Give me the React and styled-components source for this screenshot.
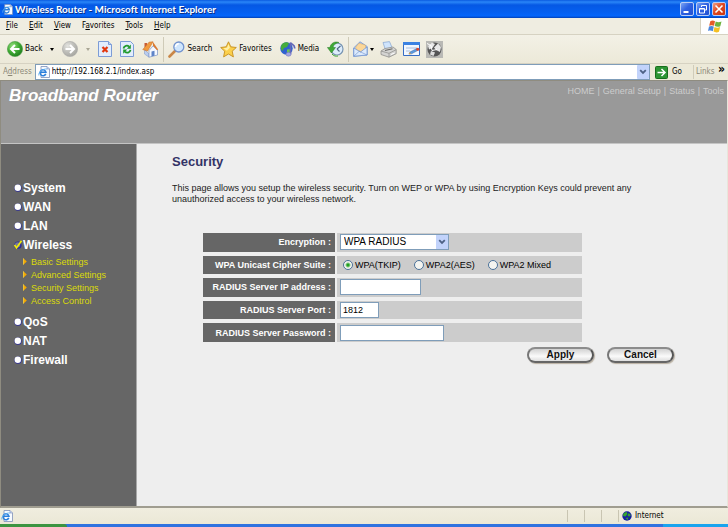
import React, { useState } from "react";
import styled, { createGlobalStyle, css } from "styled-components";

const ui = '"DejaVu Sans Condensed", "Noto Sans", sans-serif';
const web = '"Liberation Sans", Arial, sans-serif';

const GlobalStyle = createGlobalStyle`
  *, *::before, *::after { box-sizing: border-box; }
  body { margin: 0; background: #ece9d8; }
  button, input, select { font: inherit; color: inherit; margin: 0; }
  h1, h2, p, ul { margin: 0; padding: 0; }
  ul { list-style: none; }
  a { color: inherit; text-decoration: none; }
`;

const Window = styled.div`
  min-height: 100vh;
  display: flex;
  flex-direction: column;
  font: 8px/12px ${ui};
  color: #000;
`;

/* ---------- window chrome ---------- */

const TitleBar = styled.header`
  height: 18px;
  display: flex;
  align-items: center;
  gap: 2px;
  padding: 0 2px;
  background: linear-gradient(#0a5be0 0, #2a86f8 2px, #0558e4 5px, #0560f0 12px, #0466fb 16px, #0340b5 18px);
`;

const Caption = styled.div`
  flex: 1;
  color: #fff;
  font-family: Lato, "Open Sans", sans-serif;
  font-size: 10px;
  font-weight: bold;
  text-shadow: 1px 1px 0 #0a2f86;
  white-space: nowrap;
`;

const CaptionButtons = styled.div`
  display: flex;
  gap: 2px;
`;

const CaptionButton = styled.button`
  width: 14px;
  height: 14px;
  padding: 0;
  display: grid;
  place-items: center;
  border: 1px solid #b9cdf5;
  border-radius: 2px;
  background: ${(p) =>
    p.$close
      ? "linear-gradient(135deg, #f0a088, #e04a22 45%, #c8350f)"
      : "linear-gradient(135deg, #7ba4f4, #2f62e2 45%, #2250d0)"};
`;

const MenuBar = styled.nav`
  height: 17px;
  display: flex;
  align-items: stretch;
  justify-content: space-between;
  background: #efede1;
  border-bottom: 1px solid #d6d2c2;
`;

const MenuList = styled.div`
  display: flex;
  align-items: center;
  gap: 11px;
  padding-left: 6px;
`;

const MenuItem = styled.button`
  padding: 0;
  border: 0;
  background: none;
`;

const Throbber = styled.div`
  width: 28px;
  display: grid;
  place-items: center;
  background: #fff;
  border-left: 1px solid #d6d2c2;
`;

const Toolbar = styled.div`
  height: 29px;
  display: flex;
  align-items: center;
  gap: 4px;
  padding: 0 7px;
  background: linear-gradient(#f3f1e6, #ece9d8);
  border-bottom: 1px solid #d6d2c2;
`;

const ToolGroup = styled.div`
  display: flex;
  align-items: center;
  gap: ${(p) => (p.$tight ? "6px" : "8px")};
`;

const ToolButton = styled.button`
  display: flex;
  align-items: center;
  gap: 2px;
  padding: 0;
  border: 0;
  background: none;
  svg { flex: none; }
  &:disabled { color: #a9a695; }
`;

const Divider = styled.div`
  width: 1px;
  height: 25px;
  background: #cfcbb8;
`;

const AddressBar = styled.form`
  height: 16px;
  display: flex;
  align-items: center;
  gap: 3px;
  padding-left: 3px;
  background: #ece9d8;
`;

const AddressLabel = styled.label`
  color: #8b8877;
`;

const AddressField = styled.div`
  flex: 1;
  height: 16px;
  display: flex;
  align-items: center;
  gap: 2px;
  padding-left: 2px;
  background: #fff;
  border: 1px solid #7f9db9;
`;

const AddressInput = styled.input`
  flex: 1;
  min-width: 0;
  padding: 0;
  border: 0;
  outline: 0;
  background: none;
`;

const DropButton = styled.button`
  width: 12px;
  height: 14px;
  padding: 0;
  display: grid;
  place-items: center;
  border: 0;
  border-radius: 1px;
  background: #c2d3fb;
`;

const LinksBar = styled.div`
  height: 14px;
  width: 35px;
  display: flex;
  align-items: center;
  justify-content: space-between;
  padding: 0 3px 0 2px;
  border-left: 1px solid #d0ccba;
  color: #8b8877;
`;

const GoButton = styled(ToolButton)`
  width: 37px;
  gap: 4px;
  padding-left: 2px;
`;

const Chevrons = styled.strong`
  align-self: flex-start;
  font-size: 12px;
  line-height: 8px;
  color: #000;
`;

/* ---------- router page ---------- */

const Page = styled.div`
  flex: 1;
  display: flex;
  flex-direction: column;
  border: 1px solid #8f8c80;
  border-right-color: #e8e6da;
  border-bottom: 2px solid #a09d90;
  background: #eee;
  font-family: ${web};
  font-size: 9px;
`;

const Banner = styled.header`
  height: 63px;
  display: flex;
  align-items: flex-start;
  justify-content: space-between;
  padding: 4px 3px 0 8px;
  background: #999;
  border-bottom: 1px solid #c4c4c4;
`;

const Brand = styled.h1`
  font-size: 17px;
  line-height: 22px;
  font-style: italic;
  color: #fff;
`;

const TopNav = styled.nav`
  display: flex;
  gap: 3px;
  color: #ccc;
  white-space: nowrap;
`;

const Body = styled.div`
  flex: 1;
  display: flex;
`;

const Sidebar = styled.nav`
  width: 136px;
  flex: none;
  padding: 34px 0 0 12px;
  background: #666;
  border-right: 1px solid #a8a8a8;
`;

const NavLink = styled.a`
  display: flex;
  align-items: center;
  gap: 1px;
  height: 19px;
  font-size: 12px;
  font-weight: bold;
  color: #fff;
`;

const SubList = styled.ul`
  padding: 1px 0 5px 10px;
`;

const SubLink = styled.a`
  display: flex;
  align-items: center;
  gap: 4px;
  height: 13px;
  color: #dcdc08;
`;

const Main = styled.main`
  flex: 1;
  min-width: 0;
  padding: 10px 38px 0 35px;
`;

const Heading = styled.h2`
  font-size: 13px;
  line-height: 16px;
  color: #333366;
`;

const Intro = styled.p`
  max-width: 490px;
  margin-top: 13px;
  line-height: 11px;
  color: #222;
`;

const Rows = styled.div`
  display: grid;
  grid-auto-rows: 1fr;
  gap: 4px;
  min-height: 109px;
  max-width: 379px;
  margin: 28px 0 0 31px;
`;

const Row = styled.div`
  display: grid;
  grid-template-columns: 132px 1fr;
  gap: 2px;
`;

const labelLook = css`
  display: flex;
  align-items: center;
  justify-content: flex-end;
  padding-right: 4px;
  background: #666;
  color: #fff;
  font-weight: bold;
  white-space: nowrap;
`;

const RowLabel = styled.label`${labelLook}`;
const GroupLabel = styled.div`${labelLook}`;

const RowValue = styled.div`
  display: flex;
  align-items: center;
  gap: 13px;
  padding-left: ${(p) => (p.$inset ? 6 : 3)}px;
  background: #ccc;
`;

const TextBox = styled.input`
  width: ${(p) => p.$width}px;
  height: 16px;
  padding: 0 2px;
  border: 1px solid #7f9db9;
  background: #fff;
  outline: 0;
`;

const SelectWrap = styled.div`
  width: 109px;
  height: 16px;
  display: grid;
  grid-template-columns: 1fr 12px;
  align-items: center;
  background: #fff;
  border: 1px solid #7f9db9;
`;

const Select = styled.select`
  grid-area: 1 / 1 / 2 / 3;
  height: 14px;
  padding: 0 14px 0 3px;
  border: 0;
  outline: 0;
  appearance: none;
  background: none;
  font-size: 10px;
`;

const SelectArrow = styled.span`
  grid-area: 1 / 2;
  height: 14px;
  display: grid;
  place-items: center;
  background: #c2d3fb;
  pointer-events: none;
`;

const RadioLabel = styled.label`
  display: flex;
  align-items: center;
  gap: 2px;
  white-space: nowrap;
`;

const Radio = styled.input.attrs({ type: "radio" })`
  appearance: none;
  width: 10px;
  height: 10px;
  border: 1px solid #4a7199;
  border-radius: 50%;
  background: #f4f4f0;
  &:checked { background: radial-gradient(circle, #22a022 0 1px, #f4f4f0 3px); }
`;

const Actions = styled.div`
  display: flex;
  justify-content: flex-end;
  gap: 13px;
  max-width: 502px;
  margin-top: 5px;
`;

const PillButton = styled.button`
  width: 67px;
  height: 16px;
  padding: 0;
  border: 2px solid;
  border-color: #8c8c8c #555 #666 #777;
  border-radius: 8px;
  background: linear-gradient(#d2d2d2, #fafafa 60%, #dedede);
  box-shadow: 1px 1px 1px #b8afa0;
  font-size: 10px;
  line-height: 12px;
  font-weight: bold;
  color: #111;
`;

/* ---------- bottom bars ---------- */

const StatusBar = styled.footer`
  height: 16px;
  display: flex;
  align-items: center;
  padding-left: 1px;
  background: linear-gradient(#f0eddf, #ebe8d6);
`;

const StatusText = styled.div`
  flex: 1;
  display: flex;
`;

const StatusCell = styled.div`
  width: ${(p) => (p.$wide ? 110 : 17)}px;
  height: 12px;
  display: flex;
  align-items: center;
  gap: 3px;
  padding-left: 3px;
  border-left: 1px solid #c9c5b2;
`;

const TaskBar = styled.div`
  height: 3px;
  display: flex;
  background: #2f73e0;
`;

const StartEdge = styled.div`
  width: 67px;
  background: #3c9440;
  border-top-right-radius: 3px;
`;

const TrayEdge = styled.div`
  width: 65px;
  margin-left: auto;
  background: #19a4ee;
`;

/* ---------- drawings ---------- */

const IePage = ({ size = 12 }) => (
  <svg width={size} height={size} viewBox="0 0 12 12" aria-hidden="true">
    <path d="M3 .5h6l2.500 2.500v8.500H3z" fill="#f6faff" stroke="#7d8fb8" strokeWidth=".8" />
    <path d="M9 .5v2.500h2.500" fill="#c5d5f2" stroke="#7d8fb8" strokeWidth=".6" />
    <path d="M7.800 7.900A3 3 0 1 1 8 6.300H2.600" fill="none" stroke="#2b7fdc" strokeWidth="1.500" />
    <path d="M.8 9.500C-.3 6.500 5 2.300 9 3.100" fill="none" stroke="#58aef2" strokeWidth=".8" />
  </svg>
);

const DownCaret = () => (
  <svg width="4" height="3" viewBox="0 0 4 3" aria-hidden="true">
    <path d="M0 0h4L2 3z" fill="currentColor" />
  </svg>
);

const ComboArrow = () => (
  <svg width="8" height="6" viewBox="0 0 8 6" aria-hidden="true">
    <path d="M1.200 1.200L4 4l2.800-2.800" fill="none" stroke="#4d6185" strokeWidth="1.800" />
  </svg>
);

const ArrowDisc = ({ forward }) => (
  <svg width="16" height="16" viewBox="0 0 16 16" aria-hidden="true">
    <defs>
      <radialGradient id={forward ? "discF" : "discB"} cx=".35" cy=".3" r=".75">
        <stop offset="0" stopColor={forward ? "#e4e4e0" : "#94df7c"} />
        <stop offset=".55" stopColor={forward ? "#bdbdb8" : "#3faa33"} />
        <stop offset="1" stopColor={forward ? "#a6a6a0" : "#1e7c1d"} />
      </radialGradient>
    </defs>
    <circle cx="8" cy="8" r="7.600" fill={`url(#${forward ? "discF" : "discB"})`} stroke={forward ? "#aaa" : "#4b9a45"} strokeWidth=".6" />
    <path
      d={forward ? "M3.500 8h8M8 4l4 4-4 4" : "M12.500 8h-8M8 4L4 8l4 4"}
      fill="none" stroke="#fff" strokeWidth="2"
    />
  </svg>
);

const SheetBase = () => (
  <path d="M.5.5h10l3 3v12H.5z" fill="#e2edfd" stroke="#7c9cd6" />
);

const StopIcon = () => (
  <svg width="14" height="16" viewBox="0 0 14 16" aria-hidden="true">
    <SheetBase />
    <path d="M10.500.5v3h3" fill="#bdd2f6" stroke="#7c9cd6" />
    <path d="M4.500 6l5 5M9.500 6l-5 5" stroke="#e2380f" strokeWidth="2.200" />
  </svg>
);

const RefreshIcon = () => (
  <svg width="14" height="16" viewBox="0 0 14 16" aria-hidden="true">
    <SheetBase />
    <path d="M3.500 7.500C4 4.500 7.500 3.800 9 5.700" fill="none" stroke="#1f9a2c" strokeWidth="1.800" />
    <path d="M10.800 3.500v4.300H6.800z" fill="#1f9a2c" />
    <path d="M10.500 8.800c-.5 3-4 3.700-5.500 1.800" fill="none" stroke="#1f9a2c" strokeWidth="1.800" />
    <path d="M3.200 12.800V8.600h4z" fill="#1f9a2c" />
  </svg>
);

const HomeIcon = () => (
  <svg width="17" height="17" viewBox="0 0 17 17" aria-hidden="true">
    <path d="M2.500 2h2.500v4H2.500z" fill="#c85a32" />
    <path d="M2.500 8.500L7 13v3.200L2.500 13z" fill="#b9cdf0" stroke="#7b93c4" strokeWidth=".5" />
    <path d="M7 16.200V9.500l4-4.500 4.500 4v5z" fill="#f5f8ff" stroke="#7b93c4" strokeWidth=".7" />
    <path d="M9.500 10.500l3-.7v5l-3 .7z" fill="#5e84c8" />
    <path d="M.8 8.500L7 1.200 11 .8 5.500 10z" fill="#f19a3e" stroke="#c8702c" strokeWidth=".6" />
    <path d="M10.800.8L16.200 8.500l-1.200.8L11 4.500z" fill="#dc7b30" />
  </svg>
);

const SearchIcon = () => (
  <svg width="17" height="17" viewBox="0 0 17 17" aria-hidden="true">
    <path d="M1.500 15.500l5.500-5.500" stroke="#c98747" strokeWidth="2.600" strokeLinecap="round" />
    <circle cx="10.800" cy="6" r="5" fill="#cfe6fd" stroke="#7394cf" strokeWidth="1.300" />
    <path d="M7.500 6a3.500 3.500 0 0 1 3.300-3.300" fill="none" stroke="#fff" strokeWidth="1.400" />
  </svg>
);

const StarIcon = () => (
  <svg width="17" height="17" viewBox="0 0 17 17" aria-hidden="true">
    <path d="M8.500.8l2.300 5 5.500.7-4.100 3.700 1.200 5.700-4.900-2.900-4.900 2.900 1.100-5.700L.7 6.500l5.500-.7z" fill="#fbd04c" stroke="#c48d1e" strokeWidth=".9" />
    <path d="M8.500 3l1.400 3.800-3 3-3.500-2.500 3.600-.5z" fill="#fff0a8" />
  </svg>
);

const MediaIcon = () => (
  <svg width="16" height="16" viewBox="0 0 16 16" aria-hidden="true">
    <circle cx="6.500" cy="7.500" r="6.200" fill="#2f62cf" />
    <path d="M1.500 4c2-3.500 6-3.200 7.500-1.500L7 6 4 7 2.500 10C.5 8.500.5 6 1.500 4z" fill="#45ad3c" />
    <path d="M7 8.500l4-.5-1 4-3 1z" fill="#6cc552" />
    <path d="M10.500 13V1.500c1 2.500 5 2 4 6" fill="none" stroke="#6468b8" strokeWidth="1.700" />
    <ellipse cx="8.500" cy="13.200" rx="2.600" ry="2" fill="#a3a6e4" stroke="#6468b8" strokeWidth=".5" />
  </svg>
);

const HistoryIcon = () => (
  <svg width="17" height="16" viewBox="0 0 17 16" aria-hidden="true">
    <circle cx="10" cy="8" r="6" fill="#dcecfb" stroke="#7895b3" strokeWidth="1.200" />
    <path d="M10 8l3.500-3M10 8l2.500 2.500" stroke="#4d6785" strokeWidth="1.100" />
    <path d="M12 1.500C7.500-.2 3.500 2.500 3 6.500H.4L4.500 12l4-5.500H6C6.300 4.300 8.500 2 12 1.500z" fill="#3fa937" stroke="#287d25" strokeWidth=".5" />
    <path d="M5 13c1.500 2 4 2.500 6 2" fill="none" stroke="#3fa937" />
  </svg>
);

const MailIcon = () => (
  <svg width="15" height="16" viewBox="0 0 15 16" aria-hidden="true">
    <path d="M.6 7L7 .8 14.200 5.500V14L.6 15.400z" fill="#b9d3f7" stroke="#6e92cf" strokeWidth=".8" />
    <path d="M2.800 6L6 2.200l6.500 2v4.500L7.500 11 3 8.500z" fill="#fbd799" stroke="#dca65b" strokeWidth=".5" />
    <path d="M.8 7l6.700 4L14 6v8L.8 15.200z" fill="#dceafc" stroke="#6e92cf" strokeWidth=".7" />
    <path d="M.8 15.200l5.500-5 1.500.8L14 14" fill="none" stroke="#6e92cf" strokeWidth=".6" />
  </svg>
);

const PrintIcon = () => (
  <svg width="17" height="17" viewBox="0 0 17 17" aria-hidden="true">
    <path d="M3 1.500L9.500.6l3 7-7 1.500z" fill="#cfe4fc" stroke="#84a3cf" strokeWidth=".7" />
    <path d="M1 10l4-2.500 8-1.500 3.200 2.500v4.200L9 16.200 1 13.500z" fill="#d4d4d2" stroke="#858583" strokeWidth=".7" />
    <path d="M1 10l8 2.300 7.200-3.600M9 12.300v3.900" fill="none" stroke="#92928f" strokeWidth=".8" />
    <path d="M5 9.500l7.500-1.800" stroke="#696967" strokeWidth="1.100" />
    <path d="M11 13.500l3.500-1.500" stroke="#fff" />
  </svg>
);

const EditIcon = () => (
  <svg width="17" height="14" viewBox="0 0 17 14" aria-hidden="true">
    <path d="M.5.5h16v13H.5z" fill="#f2f7fe" stroke="#356dc5" />
    <path d="M0 0h17v3H0z" fill="#3b82e2" />
    <path d="M3 6h11M3 9h4" stroke="#a7bee0" />
    <path d="M6 12l1-2 7-3.500 1 1.800-6.500 3.500z" fill="#5b9de4" stroke="#355f97" strokeWidth=".5" />
    <circle cx="14.800" cy="7.300" r="1.500" fill="#df452b" />
    <path d="M5.500 12.200l2.400-.3-1-1.700z" fill="#e6a33e" />
  </svg>
);

const DiscussIcon = () => (
  <svg width="17" height="17" viewBox="0 0 17 17" aria-hidden="true">
    <path d="M0 0h17v17H0z" fill="#b9b9b5" />
    <circle cx="8.500" cy="8.500" r="7" fill="#555" />
    <path d="M2 5l4-3.500 3 1.500-2.500 4L3 8.500zM8 6.500l4-4 3 3.500-1 5-4-2z" fill="#e8e8e8" />
    <path d="M5 10l4 1.500L7.500 15 4 13.500z" fill="#ddd" />
    <path d="M1 2.500l4 2 1 5 5-1" fill="none" stroke="#fff" />
  </svg>
);

const GoIcon = () => (
  <svg width="13" height="13" viewBox="0 0 13 13" aria-hidden="true">
    <rect x=".5" y=".5" width="12" height="12" rx="1" fill="#2c9433" stroke="#166e1c" />
    <path d="M2.500 6.500h7M6.500 3l3.500 3.500L6.500 10" fill="none" stroke="#fff" strokeWidth="1.500" />
  </svg>
);

const WindowsFlag = () => (
  <svg width="14" height="13" viewBox="0 0 14 13" aria-hidden="true">
    <path d="M2.300 1.200C4 .2 5.500.4 7 1.200L6 5.700C4.500 5 3 4.900 1.200 5.700z" fill="#e65a28" />
    <path d="M7.700 1.500c1.800.9 3.800.9 5.800 0l-1.200 4.700c-1.800.8-3.800.7-5.600-.2z" fill="#6fb33f" />
    <path d="M1 6.600c1.700-.9 3.300-.8 4.800 0l-1 4.600C3.300 10.400 1.700 10.300 0 11z" fill="#4a86dc" />
    <path d="M6.500 7c1.700.8 3.600.9 5.600.1L11 11.800c-2 .9-3.800.7-5.500-.2z" fill="#f4c024" />
  </svg>
);

const MinimizeGlyph = () => (
  <svg width="10" height="10" viewBox="0 0 10 10" aria-hidden="true"><path d="M1.500 7h5v2h-5z" fill="#fff" /></svg>
);
const RestoreGlyph = () => (
  <svg width="10" height="10" viewBox="0 0 10 10" aria-hidden="true">
    <path d="M3.500 3V1.500h5v4.500H7M1.500 4.500h5V9h-5zM1.500 5h5" fill="none" stroke="#fff" />
  </svg>
);
const CloseGlyph = () => (
  <svg width="10" height="10" viewBox="0 0 10 10" aria-hidden="true"><path d="M1.500 1.500l7 7M8.500 1.500l-7 7" stroke="#fff" strokeWidth="1.600" /></svg>
);

const Bullet = ({ checked }) => (
  <svg width="9" height="10" viewBox="0 0 9 10" aria-hidden="true">
    <circle cx="5" cy="5.200" r="3.600" fill="#2a2a9c" />
    {checked ? (
      <>
        <circle cx="4.600" cy="4.800" r="2.600" fill="#777a9c" />
        <path d="M1.500 5l2 3L8.500.8" fill="none" stroke="#f4f000" strokeWidth="1.500" />
      </>
    ) : (
      <circle cx="4.800" cy="4.700" r="3.200" fill="#fff" />
    )}
  </svg>
);

const SubMarker = () => (
  <svg width="4" height="7" viewBox="0 0 4 7" aria-hidden="true">
    <path d="M.3.300L3.800 3.500.3 6.700z" fill="#f5a800" />
    <path d="M.3.300v6.400" stroke="#ffe04a" strokeWidth=".8" />
  </svg>
);

const Globe = () => (
  <svg width="10" height="10" viewBox="0 0 10 10" aria-hidden="true">
    <circle cx="5" cy="5" r="4.700" fill="#1720a0" />
    <path d="M1.500 2.500L4.500.8 5.500 3 3.500 5.500 1 5zM6.500 2l2.500 2-1.500 1.500L5.500 5zM3.500 7l3-.5L5.500 9z" fill="#35a52d" />
  </svg>
);

/* ---------- screens ---------- */

const menus = [["", "F", "ile"], ["", "E", "dit"], ["", "V", "iew"], ["F", "a", "vorites"], ["", "T", "ools"], ["", "H", "elp"]];
const topLinks = ["HOME", "General Setup", "Status", "Tools"];
const sections = [
  { name: "System" },
  { name: "WAN" },
  { name: "LAN" },
  { name: "Wireless", children: ["Basic Settings", "Advanced Settings", "Security Settings", "Access Control"] },
  { name: "QoS" },
  { name: "NAT" },
  { name: "Firewall" },
];
const ciphers = ["WPA(TKIP)", "WPA2(AES)", "WPA2 Mixed"];

function BrowserChrome() {
  return (
    <>
      <TitleBar>
        <IePage size={11} />
        <Caption>Wireless Router - Microsoft Internet Explorer</Caption>
        <CaptionButtons>
          <CaptionButton aria-label="Minimize"><MinimizeGlyph /></CaptionButton>
          <CaptionButton aria-label="Restore"><RestoreGlyph /></CaptionButton>
          <CaptionButton $close aria-label="Close"><CloseGlyph /></CaptionButton>
        </CaptionButtons>
      </TitleBar>
      <MenuBar aria-label="Menu">
        <MenuList>
          {menus.map(([before, key, after]) => (
            <MenuItem key={before + key + after}>{before}<u>{key}</u>{after}</MenuItem>
          ))}
        </MenuList>
        <Throbber><WindowsFlag /></Throbber>
      </MenuBar>
      <Toolbar>
        <ToolGroup>
          <ToolButton><ArrowDisc /> Back</ToolButton>
          <ToolButton aria-label="Back history"><DownCaret /></ToolButton>
          <ToolButton aria-label="Forward"><ArrowDisc forward /></ToolButton>
          <ToolButton aria-label="Forward history" disabled><DownCaret /></ToolButton>
          <ToolButton aria-label="Stop"><StopIcon /></ToolButton>
          <ToolButton aria-label="Refresh"><RefreshIcon /></ToolButton>
          <ToolButton aria-label="Home"><HomeIcon /></ToolButton>
        </ToolGroup>
        <Divider />
        <ToolGroup>
          <ToolButton><SearchIcon /> Search</ToolButton>
          <ToolButton><StarIcon /> Favorites</ToolButton>
          <ToolButton><MediaIcon /> Media</ToolButton>
          <ToolButton aria-label="History"><HistoryIcon /></ToolButton>
        </ToolGroup>
        <Divider />
        <ToolGroup $tight>
          <ToolButton aria-label="Mail"><MailIcon /> <DownCaret /></ToolButton>
          <ToolButton aria-label="Print"><PrintIcon /></ToolButton>
          <ToolButton aria-label="Edit"><EditIcon /></ToolButton>
          <ToolButton aria-label="Discuss"><DiscussIcon /></ToolButton>
        </ToolGroup>
      </Toolbar>
      <AddressBar onSubmit={(e) => e.preventDefault()}>
        <AddressLabel htmlFor="address">A<u>d</u>dress</AddressLabel>
        <AddressField>
          <IePage size={12} />
          <AddressInput id="address" defaultValue="http://192.168.2.1/index.asp" />
          <DropButton type="button" aria-label="Recent addresses"><ComboArrow /></DropButton>
        </AddressField>
        <GoButton><GoIcon /> Go</GoButton>
        <LinksBar>Links <Chevrons>»</Chevrons></LinksBar>
      </AddressBar>
    </>
  );
}

function Navigation() {
  return (
    <Sidebar aria-label="Sections">
      <ul>
        {sections.map(({ name, children }) => (
          <li key={name}>
            <NavLink href="#"><Bullet checked={!!children} />{name}</NavLink>
            {children && (
              <SubList>
                {children.map((child) => (
                  <li key={child}><SubLink href="#"><SubMarker />{child}</SubLink></li>
                ))}
              </SubList>
            )}
          </li>
        ))}
      </ul>
    </Sidebar>
  );
}

function SecurityForm() {
  const [cipher, setCipher] = useState(ciphers[0]);
  return (
    <form onSubmit={(e) => e.preventDefault()}>
      <Rows>
        <Row>
          <RowLabel htmlFor="encryption">Encryption :</RowLabel>
          <RowValue>
            <SelectWrap>
              <Select id="encryption"><option>WPA RADIUS</option></Select>
              <SelectArrow><ComboArrow /></SelectArrow>
            </SelectWrap>
          </RowValue>
        </Row>
        <Row role="radiogroup" aria-labelledby="cipher-label">
          <GroupLabel id="cipher-label">WPA Unicast Cipher Suite :</GroupLabel>
          <RowValue $inset>
            {ciphers.map((name) => (
              <RadioLabel key={name}>
                <Radio name="cipher" checked={cipher === name} onChange={() => setCipher(name)} />
                {name}
              </RadioLabel>
            ))}
          </RowValue>
        </Row>
        <Row>
          <RowLabel htmlFor="server-ip">RADIUS Server IP address :</RowLabel>
          <RowValue><TextBox id="server-ip" $width={81} /></RowValue>
        </Row>
        <Row>
          <RowLabel htmlFor="server-port">RADIUS Server Port :</RowLabel>
          <RowValue><TextBox id="server-port" $width={39} defaultValue="1812" /></RowValue>
        </Row>
        <Row>
          <RowLabel htmlFor="server-password">RADIUS Server Password :</RowLabel>
          <RowValue><TextBox id="server-password" type="password" $width={104} /></RowValue>
        </Row>
      </Rows>
      <Actions>
        <PillButton type="submit">Apply</PillButton>
        <PillButton type="reset">Cancel</PillButton>
      </Actions>
    </form>
  );
}

export default function App() {
  return (
    <>
      <GlobalStyle />
      <Window>
        <BrowserChrome />
        <Page>
          <Banner>
            <Brand>Broadband Router</Brand>
            <TopNav aria-label="Top">
              {topLinks.map((link, i) => (
                <React.Fragment key={link}>
                  {i > 0 && <span>|</span>}
                  <a href="#">{link}</a>
                </React.Fragment>
              ))}
            </TopNav>
          </Banner>
          <Body>
            <Navigation />
            <Main>
              <Heading>Security</Heading>
              <Intro>
                This page allows you setup the wireless security. Turn on WEP or WPA by using
                Encryption Keys could prevent any unauthorized access to your wireless network.
              </Intro>
              <SecurityForm />
            </Main>
          </Body>
        </Page>
        <StatusBar>
          <StatusText><IePage size={12} /></StatusText>
          <StatusCell />
          <StatusCell />
          <StatusCell />
          <StatusCell $wide><Globe /> Internet</StatusCell>
        </StatusBar>
        <TaskBar><StartEdge /><TrayEdge /></TaskBar>
      </Window>
    </>
  );
}
